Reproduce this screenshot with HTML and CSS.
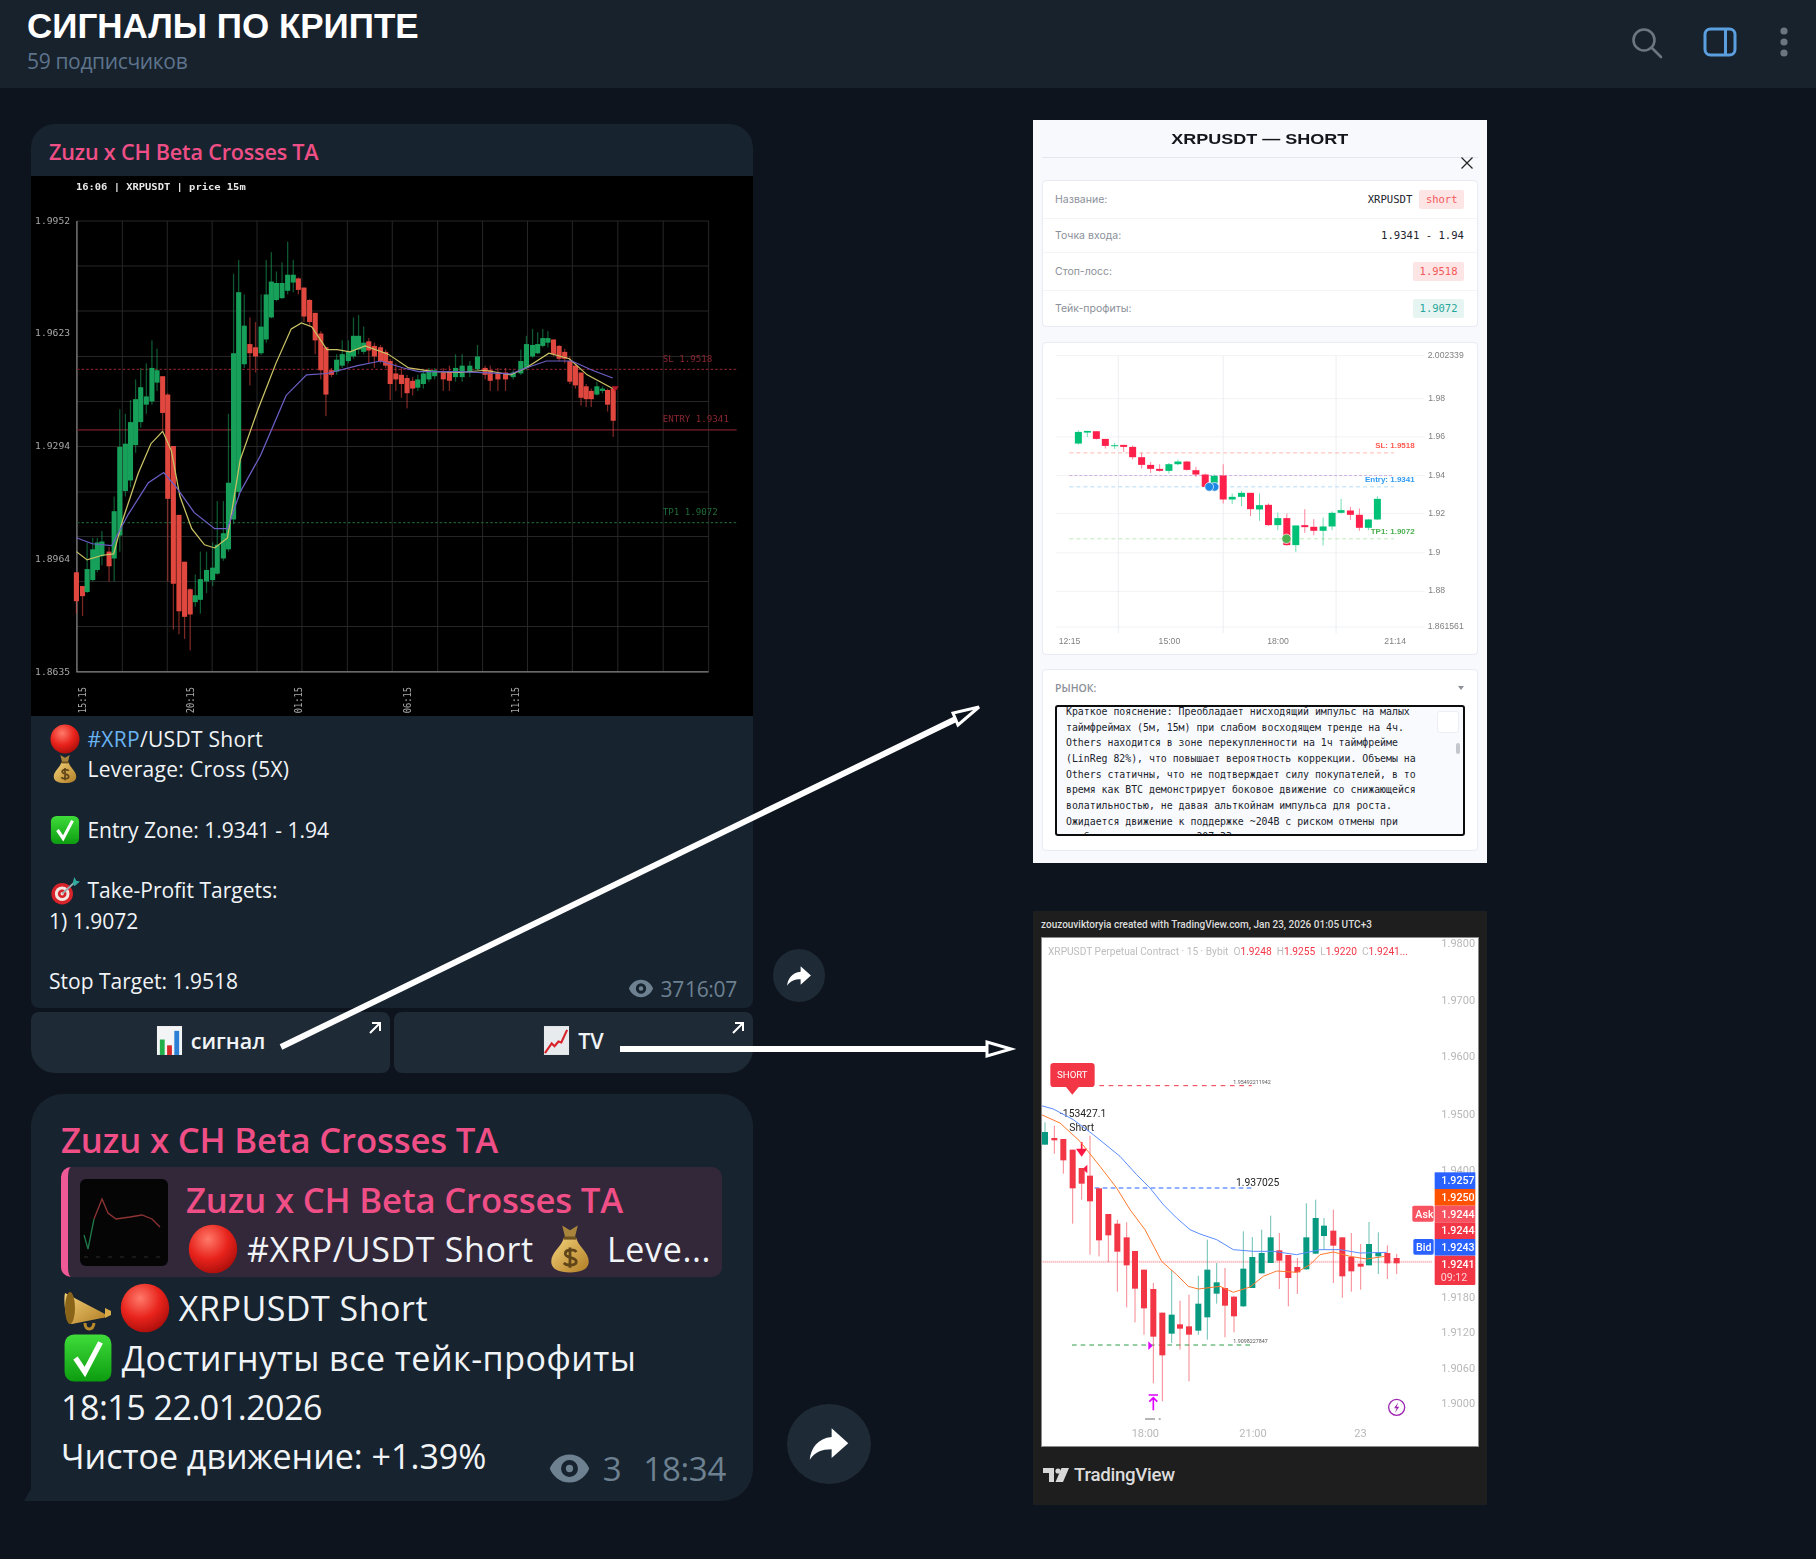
FILE: index.html
```html
<!DOCTYPE html>
<html lang="ru">
	<head>
		<meta charset="UTF-8">
		<title>Сигналы по крипте</title>
		<link rel="stylesheet" href="styles.css">
	</head>
	<body>
		<!-- emoji, нет цветного шрифта -->
		<svg class="sprite" width="0" height="0">
			<defs>
				<radialGradient id="redball" cx="40%" cy="30%" r="75%">
					<stop offset="0" stop-color="#ff7a6a"/>
					<stop offset=".55" stop-color="#e8231c"/>
					<stop offset="1" stop-color="#a80d0a"/>
				</radialGradient>
				<linearGradient id="gold" x1="0" y1="0" x2="1" y2="1">
					<stop offset="0" stop-color="#f4d27a"/>
					<stop offset="1" stop-color="#b07d24"/>
				</linearGradient>
				<linearGradient id="greenbox" x1="0" y1="0" x2="0" y2="1">
					<stop offset="0" stop-color="#3fdc3a"/>
					<stop offset="1" stop-color="#0c9c10"/>
				</linearGradient>
				<symbol id="e-red" viewBox="0 0 32 32"><ellipse cx="16" cy="16" rx="15.5" ry="15.5" fill="url(#redball)"/></symbol>
				<symbol id="e-bag" viewBox="0 0 32 32">
					<path d="M11 1l5 3 5-3-2 8h-6z" fill="#a8843c"/>
					<path d="M12 9h8c1 5 8 9 8 15 0 5-5 7-12 7S4 29 4 24c0-6 7-10 8-15z" fill="url(#gold)"/>
					<path d="M12 9h8" stroke="#6e5220" stroke-width="2"/>
					<path d="M20 18c-1-2-7-2-7 1 0 3 7 2 7 5s-6 3-8 1M16 15v13" fill="none" stroke="#5f4518" stroke-width="1.8"/>
				</symbol>
				<symbol id="e-check" viewBox="0 0 32 32">
					<rect x="1" y="1" width="30" height="30" rx="6" fill="url(#greenbox)"/>
					<path d="M8 16l6 9 10-19" fill="none" stroke="#fff" stroke-width="3.4"/>
				</symbol>
				<symbol id="e-dart" viewBox="0 0 32 32">
					<circle cx="13" cy="20" r="11.5" fill="#d8232a"/>
					<circle cx="13" cy="20" r="7.8" fill="#f3e6e0"/>
					<circle cx="13" cy="20" r="4.6" fill="#d8232a"/>
					<circle cx="13" cy="20" r="1.8" fill="#f3e6e0"/>
					<path d="M13 20L27 7" stroke="#9fb0b4" stroke-width="2"/>
					<path d="M24 9l2-7 2 4 4 1-6 5z" fill="#33a9a0"/>
				</symbol>
				<symbol id="e-bars" viewBox="0 0 28 32">
					<rect x="1" y="1" width="26" height="30" fill="#f2f4f6"/>
					<rect x="4" y="15" width="5" height="16" fill="#22b04a"/>
					<rect x="11.5" y="21" width="5" height="10" fill="#d62a2a"/>
					<rect x="19" y="6" width="5" height="25" fill="#2d7fd6"/>
				</symbol>
				<symbol id="e-line" viewBox="0 0 28 32">
					<rect x="1" y="1" width="26" height="30" fill="#e8ebee"/>
					<path d="M2 29l7-10 3 3 4-5 3 1 6-13" fill="none" stroke="#d9232b" stroke-width="2.2"/>
				</symbol>
				<symbol id="e-horn" viewBox="0 0 50 50">
					<path d="M2 10l40 21c2 2 0 4-3 4L9 41C3 42 0 18 2 10z" fill="url(#gold)"/>
					<ellipse cx="7" cy="25" rx="5" ry="16" fill="#8a6418"/>
					<path d="M42 25l6 3v4l-6 3z" fill="#d9ac4a"/>
					<path d="M22 40c0 8 8 8 9 0" fill="none" stroke="#b98a2a" stroke-width="3"/>
				</symbol>
				<symbol id="i-share" viewBox="0 0 24 24">
					<path d="M13.5 3L23 11.5 13.5 20v-5C8 15 4 16.5 1 21c.6-6.6 4.600-12.300 12.500-13z" fill="#fff"/>
				</symbol>
				<symbol id="i-eye" viewBox="0 0 30 22">
					<path d="M15 1C8 1 3 6 1 11c2 5 7 10 14 10s12-5 14-10c-2-5-7-10-14-10zm0 16a6 6 0 1 1 0-12 6 6 0 0 1 0 12z" fill="currentColor"/>
					<circle cx="15" cy="11" r="2.6" fill="currentColor"/>
				</symbol>
				<symbol id="i-corner" viewBox="0 0 12 12">
					<path d="M3 1h8v8M11 1L1 11" fill="none" stroke="#fff" stroke-width="2"/>
				</symbol>
			</defs>
		</svg>

		<header class="topbar">
			<div class="channel">
				<div class="channel-name">СИГНАЛЫ ПО КРИПТЕ</div>
				<div class="channel-subs">59 подписчиков</div>
			</div>
			<div class="topbar-tools">
				<svg class="tool tool-search" width="34" height="34" viewBox="0 0 34 34"><circle cx="14" cy="14" r="10.500" fill="none" stroke="#6b7680" stroke-width="2.600"/><path d="M22 22l9 9" stroke="#6b7680" stroke-width="2.600" stroke-linecap="round"/></svg>
				<svg class="tool" width="34" height="30" viewBox="0 0 34 30"><rect x="2" y="2" width="30" height="26" rx="5.500" fill="none" stroke="#5b9fde" stroke-width="3"/><path d="M22.500 2v26" stroke="#5b9fde" stroke-width="3"/></svg>
				<svg class="tool dots" width="8" height="30" viewBox="0 0 8 30"><circle cx="4" cy="4" r="3.600" fill="#6b7680"/><circle cx="4" cy="15" r="3.600" fill="#6b7680"/><circle cx="4" cy="26" r="3.600" fill="#6b7680"/></svg>
			</div>
		</header>

		<main class="board">
			<section class="feed">
				<div class="post post-signal">
					<div class="msg">
						<article class="bubble">
							<div class="author">Zuzu x CH Beta Crosses TA</div>
							<svg id="blackchart" class="photo" viewBox="60 382 1415 1176" preserveAspectRatio="none">
								<text class="bk-title" x="148" y="413">16:06 | XRPUSDT | price 15m</text>
								<g class="bk-axis">
									<text x="68" y="487">1.9952</text>
									<text x="68" y="730">1.9623</text>
									<text x="68" y="977">1.9294</text>
									<text x="68" y="1223">1.8964</text>
									<text x="68" y="1469">1.8635</text>
									<text transform="rotate(-90 168 1552)" x="168" y="1552">15:15</text>
									<text transform="rotate(-90 380 1552)" x="380" y="1552">20:15</text>
									<text transform="rotate(-90 592 1552)" x="592" y="1552">01:15</text>
									<text transform="rotate(-90 804 1552)" x="804" y="1552">06:15</text>
									<text transform="rotate(-90 1016 1552)" x="1016" y="1552">11:15</text>
								</g>
								<g class="bk-level">
									<text class="red" x="1298" y="787">SL 1.9518</text>
									<text class="red" x="1298" y="918">ENTRY 1.9341</text>
									<text class="grn" x="1298" y="1121">TP1 1.9072</text>
								</g>
							</svg>
							<div class="body">
								<p class="line"><svg class="emo"><use href="#e-red"/></svg> <span class="ls-a"><span class="tag">#XRP</span>/USDT Short</span><br>
								<svg class="emo"><use href="#e-bag"/></svg> <span class="ls-a">Leverage: Cross (5X)</span><br><br>
								<svg class="emo"><use href="#e-check"/></svg> Entry Zone: 1.9341 - 1.94<br><br>
								<svg class="emo"><use href="#e-dart"/></svg> Take-Profit Targets:<br>
								1) 1.9072<br><br></p>
								<div class="foot">
									<p class="line">Stop Target: 1.9518</p>
									<div class="meta"><svg class="eye"><use href="#i-eye"/></svg><span>37</span><span>16:07</span></div>
								</div>
							</div>
						</article>
						<div class="buttons">
							<a class="btn"><svg class="btn-emo"><use href="#e-bars"/></svg>сигнал<svg class="corner"><use href="#i-corner"/></svg></a>
							<a class="btn"><svg class="btn-emo"><use href="#e-line"/></svg>TV<svg class="corner"><use href="#i-corner"/></svg></a>
						</div>
					</div>
					<div class="share"><svg width="26" height="26"><use href="#i-share"/></svg></div>
				</div>

				<div class="post post-result">
					<article class="bubble bubble-big">
						<div class="author">Zuzu x CH Beta Crosses TA</div>
						<div class="quote">
							<svg class="thumb" viewBox="0 0 88 87">
								<rect width="88" height="87" rx="6" fill="#050505"/>
								<path d="M14 40l8-20 6 14 8 6 14-2 12-2 10 4 8 8" fill="none" stroke="#8f3434" stroke-width="1.300"/>
								<path d="M4 56l4 14 6-30" fill="none" stroke="#1f7a4a" stroke-width="1.300"/>
								<path d="M4 78h80" stroke="#2c2c2c" stroke-dasharray="4 8"/>
							</svg>
							<div class="quote-text">
								<div class="author">Zuzu x CH Beta Crosses TA</div>
								<div class="quote-line"><svg class="emo"><use href="#e-red"/></svg>#XRP/USDT Short<svg class="emo emo-bag"><use href="#e-bag"/></svg>Leve...</div>
							</div>
						</div>
						<p class="line"><svg class="emo emo-horn"><use href="#e-horn"/></svg><svg class="emo"><use href="#e-red"/></svg> <span class="ls-b">XRPUSDT Short</span><br>
						<svg class="emo emo-first"><use href="#e-check"/></svg> <span class="ls-b">Достигнуты все тейк-профиты</span><br>
						<span class="num">18:15 22.01.2026</span></p>
						<div class="foot">
							<p class="line">Чистое движение: +1.39%</p>
							<div class="meta"><svg class="eye"><use href="#i-eye"/></svg><span>3</span><span>18:34</span></div>
						</div>
					</article>
					<div class="share share-big"><svg width="42" height="42"><use href="#i-share"/></svg></div>
				</div>
			</section>

			<aside class="shots">
				<div class="sheet">
					<h2 class="sheet-title"><span>XRPUSDT — SHORT</span></h2>
					<svg class="close" width="12" height="12" viewBox="0 0 12 12"><path d="M.5.500l11 11M11.500.500l-11 11" stroke="#222" stroke-width="1.200"/></svg>
					<div class="card rows">
						<div class="row"><span>Название:</span><span class="vals"><b class="mono">XRPUSDT</b><i class="pill pill-red">short</i></span></div>
						<div class="row"><span>Точка входа:</span><span class="mono">1.9341 - 1.94</span></div>
						<div class="row"><span>Стоп-лосс:</span><i class="pill pill-red">1.9518</i></div>
						<div class="row"><span>Тейк-профиты:</span><i class="pill pill-green">1.9072</i></div>
					</div>
					<div class="card">
						<svg id="whitechart" class="plot" viewBox="69 8 1300 934">
							<g class="wh-axis">
								<text x="1224" y="54">2.002339</text>
								<text x="1226" y="182">1.98</text>
								<text x="1226" y="297">1.96</text>
								<text x="1226" y="412">1.94</text>
								<text x="1226" y="529">1.92</text>
								<text x="1226" y="645">1.9</text>
								<text x="1226" y="760">1.88</text>
								<text x="1224" y="867">1.861561</text>
								<text x="116" y="912">12:15</text>
								<text x="416" y="912">15:00</text>
								<text x="742" y="912">18:00</text>
								<text x="1094" y="912">21:14</text>
							</g>
							<g class="wh-label">
								<text x="1185" y="323" fill="#ff5a4f">SL: 1.9518</text>
								<text x="1185" y="426" fill="#2f9bf3">Entry: 1.9341</text>
								<text x="1185" y="582" fill="#4caf50">TP1: 1.9072</text>
							</g>
						</svg>
					</div>
					<div class="card market">
						<div class="market-head"><span>РЫНОК:</span><i class="caret"></i></div>
						<div class="market-box">
							<pre class="market-text">Краткое пояснение: Преобладает нисходящий импульс на малых
таймфреймах (5м, 15м) при слабом восходящем тренде на 4ч.
Others находится в зоне перекупленности на 1ч таймфрейме
(LinReg 82%), что повышает вероятность коррекции. Объемы на
Others статичны, что не подтверждает силу покупателей, в то
время как BTC демонстрирует боковое движение со снижающейся
волатильностью, не давая альткойнам импульса для роста.
Ожидается движение к поддержке ~204B с риском отмены при
пробое сопротивления ~207.33</pre>
							<div class="copy"></div>
							<div class="thumbbar"></div>
						</div>
					</div>
				</div>

				<div class="snap">
					<div class="snap-head">zouzouviktoryia created with TradingView.com, Jan 23, 2026 01:05 UTC+3</div>
					<svg id="tvchart" class="snap-plot" viewBox="67 115 1306 1524">
						<text class="tv-legend" x="84" y="166">XRPUSDT Perpetual Contract · 15 · Bybit  O<tspan class="hi">1.9248</tspan>  H<tspan class="hi">1.9255</tspan>  L<tspan class="hi">1.9220</tspan>  C<tspan class="hi">1.9241...</tspan></text>
						<g class="tv-axis">
							<text x="1264" y="143">1.9800</text>
							<text x="1264" y="313">1.9700</text>
							<text x="1264" y="482">1.9600</text>
							<text x="1264" y="655">1.9500</text>
							<text x="1264" y="822">1.9400</text>
							<text x="1264" y="1205">1.9180</text>
							<text x="1264" y="1310">1.9120</text>
							<text x="1264" y="1416">1.9060</text>
							<text x="1264" y="1522">1.9000</text>
							<text x="335" y="1612">18:00</text>
							<text x="658" y="1612">21:00</text>
							<text x="1003" y="1612">23</text>
						</g>
						<path d="M91 500a10 10 0 0 1 10-10h113a10 10 0 0 1 10 10v52a10 10 0 0 1-10 10h-38l-19 23-19-23h-37a10 10 0 0 1-10-10z" fill="#f23645"/>
						<text class="tv-flag" x="157" y="534">SHORT</text>
						<g class="tv-note">
							<text x="120" y="652">-153427.1</text>
							<text x="148" y="694">Short</text>
							<text x="648" y="860">1.937025</text>
						</g>
						<g class="tv-tiny">
							<text x="640" y="553">1.95492211942</text>
							<text x="640" y="1331">1.9098227847</text>
						</g>
						<path d="M238 558H695" stroke="#f23645" stroke-width="3" stroke-dasharray="14 14"/>
						<path d="M224 865H695" stroke="#2962ff" stroke-width="3" stroke-dasharray="14 10"/>
						<path d="M156 1336H695" stroke="#2e9e4a" stroke-width="3" stroke-dasharray="14 12"/>
						<path d="M64 1085H1236M64 1088H1236" stroke="#f23645" stroke-width="2" stroke-dasharray="3 3" opacity=".7"/>
						<path d="M185 727v30M173 750l12 17 12-17z" fill="#ff1744" stroke="#ff1744" stroke-width="5"/>
						<path d="M202 795v26l-14-13z" fill="#ff1744"/>
						<path d="M385 1325l13 13-13 13z" fill="#e000ff"/>
						<path d="M386 1486h28M400 1532v-36M388 1506l12-12 12 12" fill="none" stroke="#e000ff" stroke-width="5"/>
						<path d="M375 1558h30M416 1558h6" stroke="#222" stroke-width="2"/>
						<circle cx="1130" cy="1523" r="24" fill="none" stroke="#9c27b0" stroke-width="4"/>
						<path d="M1135 1508l-13 18h8l-5 13 13-18h-8z" fill="#9c27b0"/>
						<g id="tvtags" class="tv-tags">
							<rect x="1244" y="818" width="122" height="50" fill="#2962ff"/>
							<text x="1264" y="854">1.9257</text>
							<rect x="1244" y="868" width="122" height="50" fill="#ff5200"/>
							<text x="1264" y="904">1.9250</text>
							<rect x="1177" y="918" width="64" height="48" rx="5" fill="#f7525f"/>
							<text x="1186" y="954">Ask</text>
							<rect x="1244" y="918" width="122" height="50" fill="#f7525f"/>
							<text x="1264" y="954">1.9244</text>
							<rect x="1244" y="968" width="122" height="50" fill="#f23645"/>
							<text x="1264" y="1004">1.9244</text>
							<rect x="1180" y="1018" width="61" height="47" rx="5" fill="#2962ff"/>
							<text x="1188" y="1054">Bid</text>
							<rect x="1244" y="1018" width="122" height="50" fill="#2962ff"/>
							<text x="1264" y="1054">1.9243</text>
							<rect x="1244" y="1068" width="122" height="88" rx="4" fill="#f23645"/>
							<text x="1264" y="1104">1.9241</text>
							<text class="soft" x="1262" y="1144">09:12</text>
						</g>
					</svg>
					<div class="snap-foot">
						<svg width="26" height="14" viewBox="0 0 26 14"><path d="M0 0h11v14H6V5H0zM18.500 0H26l-6 14h-7.500z" fill="#d8d8d8"/><circle cx="15" cy="3" r="2.600" fill="#d8d8d8"/></svg>
						<span>TradingView</span>
					</div>
				</div>
			</aside>
		</main>

		<!-- стрелки поверх всего -->
		<svg class="arrows" width="1816" height="1559" viewBox="0 0 1816 1559">
			<path d="M281 1047L962 716" stroke="#fff" stroke-width="6"/>
			<path d="M979 707L953 713 958 725z" fill="#0d141e" stroke="#fff" stroke-width="3"/>
			<path d="M620 1049H990" stroke="#fff" stroke-width="6"/>
			<path d="M1011 1049L987 1042V1056z" fill="#0d141e" stroke="#fff" stroke-width="3"/>
		</svg>

		<script src="charts.js"></script>
	</body>
</html>
```

FILE: styles.css
```css
*{
	box-sizing: border-box;
}
body{
	margin: 0;
	width: 1816px;
	height: 1559px;
	position: relative;
	overflow: hidden;
	background-color: #0d141e;
	font-family: "Open Sans", "Noto Sans", sans-serif;
	color: #f1f4f7;
}
p{
	margin: 0;
}
.sprite{
	position: absolute;
}

/* верхняя панель */
.topbar{
	height: 88px;
	background-color: #18222d;
	display: flex;
	justify-content: space-between;
	padding: 5px 28px 0 27px;
}
.channel-name{
	font-family: "Liberation Sans", sans-serif;
	font-weight: bold;
	font-size: 35px;
	line-height: 42px;
	color: #fff;
}
.channel-subs{
	font-size: 21px;
	line-height: 30px;
	letter-spacing: -.35px;
	color: #5d748c;
	margin-top: -1px;
}
.topbar-tools{
	display: flex;
	align-items: center;
	gap: 36px;
	margin-top: -9px;
}
.tool-search{
	margin-right: 3px;
	margin-top: 1px;
}
.dots{
	margin-left: 7px;
}

/* основная часть */
.board{
	display: grid;
	grid-template-columns: 1033px 454px;
	padding-top: 32px;
}
.feed{
	padding: 4px 0 0 31px;
	display: flex;
	flex-direction: column;
	gap: 21px;
}
.post{
	display: flex;
}
.msg{
	width: 722px;
}
.bubble{
	background-color: #17232f;
	border-radius: 24px 24px 8px 8px;
	overflow: hidden;
}
.author{
	color: #ef4f86;
	font-weight: 600;
	font-size: 21.600px;
	height: 52px;
	line-height: 56px;
	padding-left: 18px;
	letter-spacing: -.2px;
}
.photo{
	display: block;
	width: 722px;
	height: 540px;
	background-color: #000;
	filter: blur(.5px);
}
.body{
	padding: 8px 18px 0;
	height: 292px;
}
.line{
	font-size: 21px;
	line-height: 30.300px;
}
.ls-a{
	letter-spacing: .3px;
}
.tag{
	color: #6ab3f3;
}
.emo{
	width: 30px;
	height: 30px;
	vertical-align: -7px;
	margin: 0 2px 0 1px;
}
.foot{
	display: flex;
	justify-content: space-between;
	align-items: flex-end;
}
.meta{
	display: flex;
	align-items: center;
	color: #6d8191;
	font-size: 21px;
	letter-spacing: -.3px;
	margin-right: -2px;
	margin-bottom: -6px;
}
.eye{
	width: 26px;
	height: 19px;
	margin-right: 7px;
}
.meta span + span{
	margin-left: 1px;
}
.buttons{
	display: flex;
	gap: 4px;
	margin-top: 4px;
}
.btn{
	flex: 1;
	height: 61px;
	position: relative;
	display: flex;
	align-items: center;
	justify-content: center;
	gap: 8px;
	background-color: #1e2a36;
	border-radius: 8px;
	font-size: 21.500px;
	font-weight: 600;
	color: #f1f4f7;
	padding-bottom: 4px;
}
.btn:first-child{
	border-bottom-left-radius: 24px;
}
.btn:last-child{
	border-bottom-right-radius: 24px;
}
.btn-emo{
	width: 27px;
	height: 31px;
}
.corner{
	position: absolute;
	top: 10px;
	right: 9px;
	width: 12px;
	height: 12px;
}
.share{
	width: 52px;
	height: 53px;
	border-radius: 50%;
	background-color: #1e2a36;
	margin: 0 0 71px 20px;
	align-self: flex-end;
	display: flex;
	align-items: center;
	justify-content: center;
}

/* второе сообщение */
.bubble-big{
	width: 722px;
	height: 407px;
	border-radius: 32px 32px 32px 0;
	padding: 19px 30px 0;
	overflow: visible;
	position: relative;
}
.bubble-big::before{
	content: "";
	position: absolute;
	left: -7px;
	bottom: 0;
	border-bottom: 14px solid #17232f;
	border-left: 8px solid transparent;
}
.bubble-big .author{
	font-size: 34.700px;
	height: 54px;
	line-height: 54px;
	padding-left: 0;
	letter-spacing: -.15px;
}
.bubble-big .line{
	font-size: 34px;
	line-height: 49px;
}
.ls-b{
	letter-spacing: .5px;
}
.num{
	letter-spacing: -.5px;
}
.bubble-big .emo{
	width: 50px;
	height: 50px;
	vertical-align: -12px;
	margin: 0;
}
.bubble-big .emo-horn{
	margin: 0 7px 0 2px;
}
.bubble-big .emo-first{
	margin-left: 2px;
}
.bubble-big .meta{
	font-size: 33px;
	margin: 0 -3px -10px 0;
}
.bubble-big .eye{
	width: 43px;
	height: 31px;
	margin-right: 12px;
}
.bubble-big .meta span + span{
	margin-left: 22px;
}
.quote{
	display: flex;
	height: 110px;
	margin: 0 1px 6px 0;
	background-color: #33283a;
	border-left: 7px solid #ef5a96;
	border-radius: 10px;
	padding: 12px 0 0 12px;
	gap: 18px;
}
.thumb{
	width: 88px;
	height: 87px;
}
.quote-text .author{
	height: 44px;
	line-height: 44px;
	margin-top: -1px;
}
.quote-line{
	display: flex;
	align-items: center;
	gap: 9px;
	font-size: 34px;
	line-height: 50px;
	letter-spacing: .65px;
	white-space: nowrap;
	margin-top: 2px;
}
.quote-line .emo:first-child{
	margin-left: 2px;
}
.quote-line .emo-bag{
	margin: 0 3px 0 2px;
}
.share-big{
	width: 84px;
	height: 80px;
	margin: 0 0 17px 34px;
}

/* правая колонка */
.shots{
	display: flex;
	flex-direction: column;
	gap: 48px;
}
.sheet{
	height: 743px;
	background-color: #f8f9fd;
	padding: 0 9px;
	position: relative;
}
.sheet-title{
	margin: 0 0 22px;
	height: 38px;
	line-height: 38px;
	border-bottom: 1px solid #e4e7ef;
	text-align: center;
	font-family: "Liberation Sans", sans-serif;
	font-weight: bold;
	font-size: 15px;
	color: #14161c;
}
.sheet-title span{
	display: inline-block;
	transform: scaleX(1.2);
}
.close{
	position: absolute;
	top: 37px;
	right: 14px;
}
.card{
	background-color: #fff;
	border: 1px solid #e8ebf2;
	border-radius: 4px;
	margin-bottom: 15px;
}
.rows{
	font-size: 10.500px;
	font-family: "Inter", "Noto Sans", sans-serif;
	color: #8b9099;
}
.row{
	display: flex;
	justify-content: space-between;
	align-items: center;
	padding: 9px 13px 9px 12px;
	line-height: 15px;
	border-bottom: 1px solid #f2f4f8;
}
.row:last-child{
	padding-top: 8px;
	padding-bottom: 8px;
	border-bottom: 0;
}
.vals{
	display: flex;
	align-items: center;
	gap: 7px;
}
.mono{
	font-family: "DejaVu Sans Mono", monospace;
	font-weight: normal;
	font-size: 10.600px;
	color: #20242c;
}
.pill{
	font-family: "DejaVu Sans Mono", monospace;
	font-style: normal;
	font-size: 10.500px;
	line-height: 19px;
	padding: 0 6.500px;
	border-radius: 2px;
}
.pill-red{
	background-color: #fde5e5;
	color: #f4585a;
}
.pill-green{
	background-color: #e6f5f2;
	color: #26a69a;
}
.plot{
	display: block;
	width: 433px;
	height: 311px;
	filter: blur(.3px);
}
.market{
	height: 182px;
	padding: 0 12px;
	margin: -1px 0 0;
}
.market-head{
	height: 35px;
	display: flex;
	justify-content: space-between;
	align-items: center;
	font-size: 10.500px;
	font-weight: 600;
	color: #8b9099;
}
.caret{
	border-top: 4px solid #8b9099;
	border-left: 3.500px solid transparent;
	border-right: 3.500px solid transparent;
	margin-right: 1px;
}
.market-box{
	height: 131px;
	border: 2px solid #0c0c0c;
	border-radius: 3px;
	background-color: #f9fafe;
	overflow: hidden;
	position: relative;
	padding-left: 9px;
}
.market-text{
	margin: -3px 0 0;
	font-family: "DejaVu Sans Mono", monospace;
	font-size: 9.850px;
	line-height: 15.670px;
	color: #20242c;
}
.copy{
	position: absolute;
	top: 4px;
	right: 4px;
	width: 22px;
	height: 22px;
	background-color: #fff;
	border: 1px solid #eceef3;
	border-radius: 3px;
}
.thumbbar{
	position: absolute;
	top: 36px;
	right: 3px;
	width: 4px;
	height: 11px;
	border-radius: 2px;
	background-color: #c4c7cd;
}
.snap{
	height: 594px;
	background-color: #1e1e1e;
	padding: 0 8px;
}
.snap-head{
	height: 26px;
	line-height: 28px;
	font-family: "Roboto", sans-serif;
	font-size: 10px;
	font-weight: 500;
	color: #dcdcdc;
	white-space: nowrap;
}
.snap-plot{
	display: block;
	width: 438px;
	height: 510px;
	background-color: #fff;
	border: 1px solid #8a8a8a;
	filter: blur(.3px);
}
.snap-foot{
	height: 58px;
	display: flex;
	align-items: center;
	gap: 5px;
	padding: 0 0 2px 2px;
	font-family: "Roboto", sans-serif;
	font-weight: 500;
	font-size: 18.700px;
	letter-spacing: -.3px;
	color: #dcdcdc;
}

/* подписи на графиках */
.bk-title{
	font-family: "DejaVu Sans Mono", monospace;
	font-size: 20.500px;
	font-weight: bold;
	fill: #e8e8e8;
}
.bk-axis text{
	font-family: "DejaVu Sans Mono", monospace;
	font-size: 19px;
	fill: #a8a8a8;
}
.bk-level text{
	font-family: "DejaVu Sans Mono", monospace;
	font-size: 18px;
}
.bk-level .red{
	fill: #8a2630;
}
.bk-level .grn{
	fill: #1f6b38;
}
.wh-axis text{
	font-family: "Liberation Sans", sans-serif;
	font-size: 26px;
	fill: #808080;
}
.wh-label text{
	font-family: "Liberation Sans", sans-serif;
	font-size: 24px;
	font-weight: bold;
	text-anchor: end;
}
.tv-legend{
	font-family: "Roboto", sans-serif;
	font-size: 30.500px;
	fill: #bdbdbd;
	white-space: pre;
}
.tv-legend .hi{
	fill: #f23645;
}
.tv-axis text{
	font-family: "Roboto", sans-serif;
	font-size: 33px;
	fill: #b8b8b8;
}
.tv-flag{
	font-family: "Roboto", sans-serif;
	font-size: 29px;
	fill: #fff;
	text-anchor: middle;
}
.tv-note text{
	font-family: "Roboto", sans-serif;
	font-size: 31px;
	fill: #222;
}
.tv-tiny text{
	font-family: "Roboto", sans-serif;
	font-size: 16px;
	fill: #555;
}
.tv-tags text{
	font-family: "Roboto", sans-serif;
	font-size: 32px;
	font-weight: 500;
	fill: #fff;
}
.tv-tags .soft{
	fill: #ffd2d6;
	font-weight: 400;
}
.arrows{
	position: absolute;
	left: 0;
	top: 0;
	pointer-events: none;
}
```

FILE: charts.js
```js
// свечи рисуются из массивов: [x, верх тела, низ тела, верх тени, низ тени, 1 = зеленая]
var NS = "http://www.w3.org/2000/svg";

function add(svg, tag, attrs, before){
	var el = document.createElementNS(NS, tag);
	for(var k in attrs){
		el.setAttribute(k, attrs[k]);
	}
	if(before){
		svg.insertBefore(el, before);
	}else{
		svg.appendChild(el);
	}
	return el;
}

function candles(svg, data, opt, before){
	for(var i = 0; i < data.length; i++){
		var c = data[i];
		var color = c[5] ? opt.up : opt.down;
		add(svg, "rect", {x: c[0] - opt.wick / 2, y: c[3], width: opt.wick, height: c[4] - c[3], fill: color, opacity: opt.wickAlpha}, before);
		add(svg, "rect", {x: c[0] - opt.body / 2, y: c[1], width: opt.body, height: Math.max(c[2] - c[1], 3), fill: color}, before);
	}
}

// сетка и уровни должны лежать под свечами и подписями
function lines(svg, list, before){
	for(var i = 0; i < list.length; i++){
		add(svg, "path", list[i], before);
	}
}

function grid(xs, ys, x1, x2, y1, y2, color, width){
	var d = "";
	for(var i = 0; i < xs.length; i++){
		d += "M" + xs[i] + " " + y1 + "V" + y2;
	}
	for(var j = 0; j < ys.length; j++){
		d += "M" + x1 + " " + ys[j] + "H" + x2;
	}
	return {d: d, stroke: color, "stroke-width": width, fill: "none"};
}

/* черный график */
var black = document.getElementById("blackchart");
var blackFirst = black.firstElementChild;
lines(black, [
	grid([239,327,415,503,591,680,768,857,945,1033,1121,1210,1299,1388], [480,578,676,775,873,971,1070,1167,1265,1363], 150, 1388, 480, 1461, "#262626", 2),
	{d: "M150 480V1462H1388", stroke: "#8a8a8a", "stroke-width": 2.5, fill: "none"},
	{d: "M150 803H1443", stroke: "#7a1f28", "stroke-width": 2.5, "stroke-dasharray": "5 4"},
	{d: "M150 935H1443", stroke: "#7a1f28", "stroke-width": 3},
	{d: "M150 1137H1443", stroke: "#1d5a32", "stroke-width": 2.5, "stroke-dasharray": "5 4"}
], blackFirst);
candles(black, [
	[149,1245,1308,1245,1335,0],[161,1275,1297,1275,1340,0],[170,1238,1288,1180,1290,1],[181,1195,1262,1170,1265,1],
	[190,1180,1240,1170,1245,1],[199,1178,1210,1155,1230,1],[213,1200,1232,1190,1265,0],[223,1112,1215,1080,1265,1],
	[234,972,1165,890,1200,1],[245,965,1068,900,1080,1],[255,918,1045,870,1060,1],[265,868,968,825,985,1],
	[275,842,918,800,930,1],[286,862,880,790,900,1],[297,800,873,740,880,1],[307,805,832,758,850,1],
	[318,818,898,818,935,0],[328,858,1085,855,1265,0],[339,970,1270,970,1370,0],[350,1120,1330,1120,1380,0],
	[361,1222,1342,1222,1390,0],[372,1282,1337,1280,1415,0],[382,1295,1310,1250,1320,1],[392,1260,1305,1200,1335,1],
	[404,1240,1265,1200,1290,1],[416,1235,1262,1180,1275,1],[425,1185,1248,1090,1250,1],[437,1160,1215,1090,1220,1],
	[447,1050,1195,900,1200,1],[457,768,1130,595,1140,1],[467,635,1070,565,1080,1],[478,708,792,640,800,1],
	[489,748,768,690,838,0],[500,755,775,700,810,0],[511,710,768,640,772,1],[521,640,738,565,745,1],
	[531,612,690,548,692,1],[541,615,652,590,655,1],[552,615,648,570,650,1],[563,597,632,525,640,1],
	[574,597,614,565,635,1],[584,605,630,603,640,0],[595,625,688,625,700,0],[606,652,700,650,710,0],
	[617,680,740,680,770,0],[628,725,805,720,825,0],[638,755,858,755,905,0],[649,805,815,800,820,0],
	[659,782,808,770,815,1],[670,770,795,740,800,1],[682,765,785,740,790,1],[692,730,775,690,780,1],
	[702,730,760,685,770,1],[712,745,765,710,770,1],[722,742,762,735,790,0],[733,752,775,745,800,0],
	[745,755,785,750,790,0],[755,765,795,760,800,0],[764,785,835,780,870,0],[775,812,825,790,850,0],
	[786,815,835,800,865,0],[797,822,855,815,888,0],[808,828,845,820,860,0],[818,825,843,815,850,1],
	[829,812,835,805,845,1],[840,805,825,800,830,1],[851,805,818,800,825,1],[868,810,825,800,850,0],
	[880,808,828,795,850,0],[892,800,820,770,830,1],[905,795,820,770,830,1],[920,795,810,785,820,1],
	[935,775,803,750,805,1],[950,800,815,795,825,0],[960,805,828,795,850,0],[975,810,825,800,850,0],
	[990,810,825,800,850,0],[1005,810,820,805,825,1],[1020,785,812,760,815,1],[1031,748,800,730,805,1],
	[1043,750,775,715,778,1],[1053,748,768,722,770,1],[1063,735,752,715,755,1],[1073,735,745,720,755,1],
	[1084,738,770,738,775,0],[1095,752,780,750,785,0],[1106,765,780,758,790,0],[1116,785,830,775,835,0],
	[1127,795,838,790,845,0],[1138,810,865,810,882,0],[1148,840,868,835,885,0],[1158,850,868,845,885,0],
	[1169,840,858,830,860,1],[1180,845,850,840,855,1],[1190,848,880,845,895,0],[1201,845,915,840,950,0]
], {up: "#17a05a", down: "#e0473f", body: 10, wick: 2.5, wickAlpha: .55}, blackFirst);
lines(black, [
	{d: "M149 1200L170 1218 200 1208 222 1205 240 1130 270 1030 295 965 318 938 335 980 352 1080 375 1150 400 1185 420 1192 445 1170 470 1000 505 890 540 790 570 715 590 702 610 710 640 760 660 760 685 765 715 752 760 770 800 800 850 808 900 810 950 805 1000 815 1030 800 1075 768 1115 780 1150 815 1200 845", stroke: "#c9c265", "stroke-width": 2.5, fill: "none"},
	{d: "M149 1170L180 1183 218 1187 250 1120 290 1050 320 1028 345 1060 380 1115 420 1150 445 1150 470 1070 510 990 560 860 600 815 640 812 700 795 745 785 790 800 820 808 900 808 1000 813 1030 800 1070 785 1120 785 1160 805 1200 822", stroke: "#6a5fc4", "stroke-width": 2.5, fill: "none"}
], blackFirst);
add(black, "path", {d: "M1198 840h14l-7 12z", fill: "#b3172a"}, blackFirst);

/* белый график */
var white = document.getElementById("whitechart");
var whiteFirst = white.firstElementChild;
lines(white, [
	{d: "M107 46H1215M107 175H1215M107 290H1215M107 406H1215M107 520H1215M107 638H1215M107 754H1215M107 861H1215", stroke: "#eef0f3", "stroke-width": 2.5},
	{d: "M295 46V880M610 46V880M949 46V880", stroke: "#e9ebef", "stroke-width": 2.5},
	{d: "M148 338H1123", stroke: "#ffaaa0", "stroke-width": 2.5, "stroke-dasharray": "12 9"},
	{d: "M148 406H1123", stroke: "#c9a3e0", "stroke-width": 2.5, "stroke-dasharray": "9 6"},
	{d: "M148 440H1123", stroke: "#a8d4f8", "stroke-width": 2.5, "stroke-dasharray": "12 9"},
	{d: "M148 596H1123", stroke: "#b6e6b6", "stroke-width": 2.5, "stroke-dasharray": "12 9"}
], whiteFirst);
candles(white, [
	[175,275,310,270,313,1],[202,272,277,272,290,1],[229,273,296,273,298,0],[256,296,317,296,325,0],
	[284,315,317,308,326,1],[311,314,320,314,335,0],[338,320,351,316,358,0],[365,351,374,338,385,0],
	[392,374,386,365,398,0],[419,386,392,372,394,0],[447,372,392,368,400,1],[474,364,372,358,375,1],
	[501,364,389,362,391,0],[528,390,403,380,410,0],[556,403,440,400,442,0],[583,407,428,403,430,1],
	[610,406,478,372,490,0],[637,470,478,460,492,1],[665,458,470,452,498,1],[692,458,507,458,528,0],
	[719,495,508,460,542,1],[746,494,555,490,557,0],[774,534,555,517,570,1],[801,534,615,520,617,0],
	[828,556,615,556,636,1],[855,555,561,507,578,0],[882,560,572,537,585,0],[910,559,572,532,616,1],
	[937,518,559,514,570,1],[964,510,518,476,520,1],[992,511,524,500,539,0],[1019,524,563,505,572,0],
	[1046,538,563,536,570,1],[1073,476,538,468,540,1]
], {up: "#00c176", down: "#ff1f4b", body: 21, wick: 3, wickAlpha: .55}, whiteFirst);
add(white, "circle", {cx: 584, cy: 440, r: 13, fill: "#1e88e5", stroke: "#fff", "stroke-width": 2}, whiteFirst);
add(white, "circle", {cx: 568, cy: 440, r: 13, fill: "#1e88e5", stroke: "#fff", "stroke-width": 2}, whiteFirst);
add(white, "circle", {cx: 800, cy: 596, r: 14, fill: "#4caf50", stroke: "#fff", "stroke-width": 2}, whiteFirst);

/* tradingview */
var tv = document.getElementById("tvchart");
var tags = document.getElementById("tvtags");
candles(tv, [
	[75,697,735,668,735,1],[103,715,722,678,762,0],[130,718,782,718,822,0],[158,750,866,750,972,0],
	[185,805,852,805,900,0],[210,828,905,708,1065,0],[237,866,1022,866,1070,0],[265,943,1007,943,1088,0],
	[292,972,1056,960,1176,0],[320,1013,1097,968,1223,0],[345,1054,1167,1054,1268,0],[372,1110,1226,1110,1305,0],
	[400,1168,1311,1150,1451,0],[427,1239,1367,1239,1505,0],[455,1245,1302,1110,1330,1],[480,1274,1287,1203,1350,0],
	[507,1280,1305,1185,1445,0],[535,1212,1293,1128,1305,1],[562,1110,1253,1020,1320,1],[590,1148,1182,1090,1212,1],
	[615,1165,1218,1105,1313,0],[642,1191,1250,1188,1298,0],[670,1107,1220,995,1222,1],[697,1072,1165,1012,1165,1],
	[725,1060,1121,990,1121,1],[752,1013,1090,948,1090,1],[778,1052,1083,1000,1168,0],[805,1066,1135,1066,1220,0],
	[832,1102,1118,1075,1183,0],[859,1013,1109,911,1110,1],[887,955,1062,900,1062,1],[912,978,1009,955,1050,1],
	[940,993,1038,930,1150,0],[967,1013,1130,1013,1194,0],[994,1072,1115,1000,1176,0],[1022,1092,1101,1033,1170,0],
	[1047,1033,1097,967,1097,1],[1075,1058,1070,998,1123,1],[1102,1060,1091,1037,1138,0],[1130,1075,1091,1063,1123,0]
], {up: "#089981", down: "#f23645", body: 18, wick: 3, wickAlpha: .6}, tags);
lines(tv, [
	{d: "M64 618L100 628 160 660 220 705 300 770 350 825 390 865 430 915 470 955 510 990 540 1003 590 1020 640 1050 700 1055 760 1055 830 1065 900 1050 960 1050 1020 1060 1100 1058", stroke: "#5b8cff", "stroke-width": 3, fill: "none"},
	{d: "M64 645L120 670 180 725 240 800 290 865 330 930 375 990 425 1085 470 1125 505 1160 535 1168 600 1160 640 1178 690 1162 730 1130 770 1114 830 1118 870 1095 900 1065 940 1057 990 1070 1040 1078 1095 1070", stroke: "#ff7a30", "stroke-width": 3, fill: "none"}
], tags);
```
